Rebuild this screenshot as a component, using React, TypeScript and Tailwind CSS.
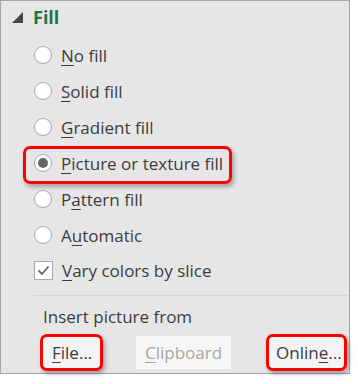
import React from "react";

const font = { fontFamily: '"Open Sans", "Noto Sans", sans-serif' };

function Radio({ checked }: { checked?: boolean }) {
  return (
    <span className="w-[18px] h-[18px] rounded-full bg-white border border-[#a8a8a8] flex items-center justify-center shrink-0">
      {checked && <span className="w-[10px] h-[10px] rounded-full bg-[#666]" />}
    </span>
  );
}

function Row({
  children,
  checked,
  boxed,
}: {
  children: React.ReactNode;
  checked?: boolean;
  boxed?: boolean;
}) {
  return (
    <div className="relative h-[36px] flex items-center gap-[9px]">
      {boxed && (
        <span className="absolute left-[-11px] top-[1px] w-[209px] h-[38px] border-[3.5px] border-[#ff0000] rounded-[7px] shadow-[2px_3px_4px_rgba(0,0,0,0.3)]" />
      )}
      <Radio checked={checked} />
      <span className="text-[17px] text-[#3c3c3c] leading-none">{children}</span>
    </div>
  );
}

export default function App() {
  return (
    <div className="w-[358px] h-[384px] bg-white" style={font}>
      <div className="w-[350px] h-[374px] border border-[#a6a6a6] bg-[#e6e6e6] flex flex-col">
        <div className="h-[32px] flex items-center pl-[11px] gap-[10px]">
          <svg width="11" height="11" viewBox="0 0 11 11">
            <polygon points="11,0 11,11 0,11" fill="#444" />
          </svg>
          <span className="text-[18px] font-bold text-[#217346] leading-none">Fill</span>
        </div>
        <div className="pl-[33px] pt-[4px] flex flex-col">
          <Row>
            <u className="underline-offset-[3px]">N</u>o fill
          </Row>
          <Row>
            <u className="underline-offset-[3px]">S</u>olid fill
          </Row>
          <Row>
            <u className="underline-offset-[3px]">G</u>radient fill
          </Row>
          <Row checked boxed>
            <u className="underline-offset-[3px]">P</u>icture or texture fill
          </Row>
          <Row>
            P<u className="underline-offset-[3px]">a</u>ttern fill
          </Row>
          <Row>
            A<u className="underline-offset-[3px]">u</u>tomatic
          </Row>
          <div className="h-[34px] flex items-center gap-[9px]">
            <span className="w-[19px] h-[19px] bg-white border border-[#a8a8a8] flex items-center justify-center shrink-0">
              <svg width="13" height="11" viewBox="0 0 13 11">
                <polyline points="1.5,5.5 5,9 11.5,1.5" fill="none" stroke="#666" strokeWidth="1.8" />
              </svg>
            </span>
            <span className="text-[17px] text-[#3c3c3c] leading-none">
              <u className="underline-offset-[3px]">V</u>ary colors by slice
            </span>
          </div>
        </div>
        <div className="ml-[32px] mr-[1px] mt-[8px] h-px bg-[#d4d4d4]" />
        <div className="pl-[42px] pt-[12px] h-[38px] text-[17px] text-[#3c3c3c] leading-none">
          Insert picture from
        </div>
        <div className="flex items-center h-[37px] pl-[39px]">
          <span className="w-[63px] h-[37px] border-[3.5px] border-[#ff0000] rounded-[7px] bg-[#f3f3f3] shadow-[2px_3px_4px_rgba(0,0,0,0.3)] flex items-center pl-[9px] text-[17px] text-[#3c3c3c]">
            <u className="underline-offset-[3px]">F</u>ile...
          </span>
          <span className="ml-[33px] w-[95px] h-[33px] bg-[#f7f7f7] flex items-center justify-center text-[17px] text-[#a6a6a6]">
            <u className="underline-offset-[3px]">C</u>lipboard
          </span>
          <span className="ml-[35px] w-[81px] h-[37px] border-[3.5px] border-[#ff0000] rounded-[7px] bg-[#f3f3f3] shadow-[2px_3px_4px_rgba(0,0,0,0.3)] flex items-center pl-[7px] text-[17px] text-[#3c3c3c]">
            Onlin<u className="underline-offset-[3px]">e</u>...
          </span>
        </div>
      </div>
    </div>
  );
}
